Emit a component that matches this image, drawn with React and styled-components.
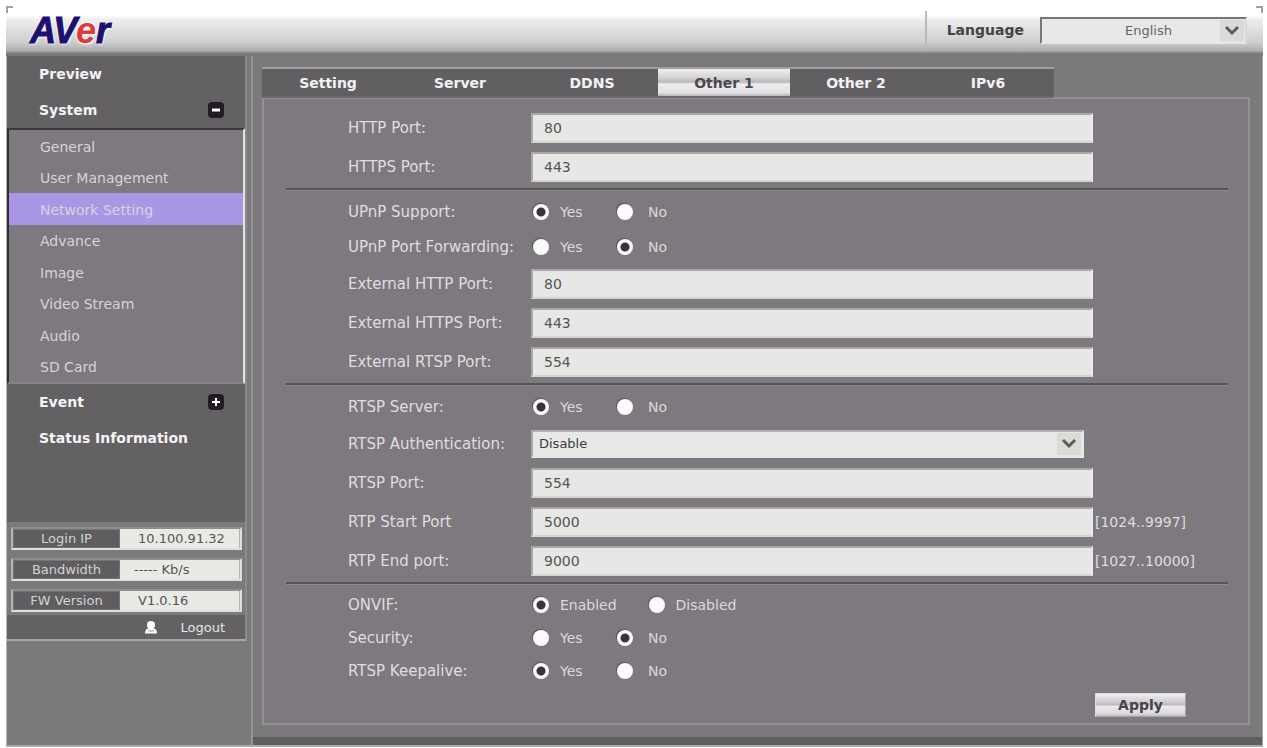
import React, { useState } from 'react'
import styled, { createGlobalStyle } from 'styled-components'

const menu = ['General', 'User Management', 'Network Setting', 'Advance', 'Image', 'Video Stream', 'Audio', 'SD Card']
const tabs = ['Setting', 'Server', 'DDNS', 'Other 1', 'Other 2', 'IPv6']

function Chevron() {
    return (
        <svg width="16" height="11" viewBox="0 0 16 11" aria-hidden="true">
            <path d="M2 2 L8 8 L14 2" fill="none" stroke="#5c5c5c" strokeWidth="3" />
        </svg>
    )
}

function TextRow({ id, label, value, hint }) {
    return (
        <Row>
            <Label htmlFor={id}>{label}</Label>
            <TextBox id={id} type="text" defaultValue={value} />
            {hint && <Hint>{hint}</Hint>}
        </Row>
    )
}

function RadioRow({ name, label, options = ['Yes', 'No'], checked, small }) {
    return (
        <Row $size={small ? 33 : 35} role="radiogroup" aria-labelledby={name}>
            <Label as="span" id={name}>{label}</Label>
            <Options>
                {options.map((option) => (
                    <Option key={option} $wide={option === 'No'}>
                        <Radio name={name} defaultChecked={option === checked} />
                        {option}
                    </Option>
                ))}
            </Options>
        </Row>
    )
}

export default function App() {
    const [tab, setTab] = useState('Other 1')

    return (
        <Page>
            <GlobalStyle />
            <Header>
                <Logo>AV<span>e</span>r</Logo>
                <Language>
                    <label htmlFor="language">Language</label>
                    <SelectWrap $top>
                        <select id="language"><option>English</option></select>
                        <Arrow><Chevron /></Arrow>
                    </SelectWrap>
                </Language>
            </Header>

            <Main>
                <Sidebar>
                    <Nav>
                        <MenuTitle href="#preview">Preview</MenuTitle>
                        <MenuTitle href="#system">
                            System
                            <Toggle viewBox="0 0 16 16">
                                <rect width="16" height="16" rx="4" fill="#201c22" />
                                <path d="M4 8 H12" stroke="#fff" strokeWidth="3" />
                            </Toggle>
                        </MenuTitle>
                        <SubMenu>
                            {menu.map((item) => (
                                <MenuItem key={item} href="#menu" $active={item === 'Network Setting'}>{item}</MenuItem>
                            ))}
                        </SubMenu>
                        <MenuTitle href="#event">
                            Event
                            <Toggle viewBox="0 0 16 16">
                                <rect width="16" height="16" rx="4" fill="#201c22" />
                                <path d="M4 8 H12 M8 4 V12" stroke="#fff" strokeWidth="2" />
                            </Toggle>
                        </MenuTitle>
                        <MenuTitle href="#status">Status Information</MenuTitle>
                    </Nav>
                    <InfoList>
                        <InfoRow><dt>Login IP</dt><dd>10.100.91.32</dd></InfoRow>
                        <InfoRow $near><dt>Bandwidth</dt><dd>----- Kb/s</dd></InfoRow>
                        <InfoRow><dt>FW Version</dt><dd>V1.0.16</dd></InfoRow>
                    </InfoList>
                    <Logout href="#logout">
                        <svg width="12" height="13" viewBox="0 0 12 13" aria-hidden="true">
                            <circle cx="6" cy="4" r="4" fill="#fff" />
                            <path d="M4 7 H8 C10.5 8 12 9 12 12.5 H0 C0 9 1.5 8 4 7 Z" fill="#fff" />
                            <path d="M3 9.5 Q6 11 9 9.5" fill="none" stroke="#9a989b" />
                        </svg>
                        Logout
                    </Logout>
                </Sidebar>

                <Content>
                    <Tabs role="tablist">
                        {tabs.map((name) => (
                            <Tab key={name} role="tab" aria-selected={name === tab} $active={name === tab} onClick={() => setTab(name)}>
                                {name}
                            </Tab>
                        ))}
                    </Tabs>
                    <Panel>
                        <Group>
                            <TextRow id="http" label="HTTP Port:" value="80" />
                            <TextRow id="https" label="HTTPS Port:" value="443" />
                        </Group>
                        <Group>
                            <RadioRow name="upnp" label="UPnP Support:" checked="Yes" />
                            <RadioRow name="forwarding" label="UPnP Port Forwarding:" checked="No" />
                            <TextRow id="ext-http" label="External HTTP Port:" value="80" />
                            <TextRow id="ext-https" label="External HTTPS Port:" value="443" />
                            <TextRow id="ext-rtsp" label="External RTSP Port:" value="554" />
                        </Group>
                        <Group>
                            <RadioRow name="rtsp-server" label="RTSP Server:" checked="Yes" />
                            <Row>
                                <Label htmlFor="rtsp-auth">RTSP Authentication:</Label>
                                <SelectWrap>
                                    <select id="rtsp-auth"><option>Disable</option></select>
                                    <Arrow><Chevron /></Arrow>
                                </SelectWrap>
                            </Row>
                            <TextRow id="rtsp-port" label="RTSP Port:" value="554" />
                            <TextRow id="rtp-start" label="RTP Start Port" value="5000" hint="[1024..9997]" />
                            <TextRow id="rtp-end" label="RTP End port:" value="9000" hint="[1027..10000]" />
                        </Group>
                        <Group>
                            <RadioRow small name="onvif" label="ONVIF:" options={['Enabled', 'Disabled']} checked="Enabled" />
                            <RadioRow small name="security" label="Security:" checked="No" />
                            <RadioRow small name="keepalive" label="RTSP Keepalive:" checked="Yes" />
                        </Group>
                        <Apply>Apply</Apply>
                    </Panel>
                </Content>
            </Main>
        </Page>
    )
}

const GlobalStyle = createGlobalStyle`
    *{
        box-sizing: border-box;
    }

    body{
        margin: 0;
        background-color: #fff;
        font-family: "DejaVu Sans", Verdana, sans-serif;
        font-size: 14px;
    }

    button, input, select{
        font-family: inherit;
    }

    a{
        text-decoration: none;
    }
`

const Page = styled.div`
    padding: 6px 4px 1px 6px;
`

const Header = styled.header`
    position: relative;
    display: flex;
    justify-content: space-between;
    height: 50px;
    background: linear-gradient(#fff 0, #fff 9px, #ededed 14px, #dedede 24px, #cfcfcf 36px, #adadad 45px, #7f7f7f 47px, #757575 50px);

    &::before, &::after{
        content: "";
        position: absolute;
        top: 0;
        width: 5px;
        height: 5px;
        border-top: 2px solid #a2a2a2;
    }

    &::before{
        left: 0;
        border-left: 2px solid #a2a2a2;
    }

    &::after{
        right: 0;
        border-right: 2px solid #a2a2a2;
    }
`

const Logo = styled.div`
    padding: 5px 0 0 24px;
    font: italic bold 36px/40px "Liberation Sans", Arial, sans-serif;
    color: #1c1070;
    -webkit-text-stroke: 1px #1c1070;
    text-shadow: 0 0 3px #fff, 0 0 3px #fff, 1px 1px 2px #fff;

    span{
        color: #e03a3f;
        -webkit-text-stroke: 0;
    }
`

const Language = styled.div`
    display: flex;
    align-items: center;
    gap: 16px;
    height: 38px;
    margin-top: 5px;
    margin-right: 16px;
    padding-left: 20px;
    border-left: 2px solid #b9b9b9;
    font-weight: bold;
    color: #454348;
`

const SelectWrap = styled.div`
    position: relative;
    width: ${(props) => (props.$top ? '207px' : 'auto')};
    margin-right: ${(props) => (props.$top ? 0 : '9px')};

    select{
        appearance: none;
        display: block;
        width: 100%;
        height: ${(props) => (props.$top ? '27px' : '28px')};
        padding: ${(props) => (props.$top ? '0 0 0 10px' : '0 28px 0 6px')};
        border: 2px solid;
        border-color: ${(props) => (props.$top ? '#77777a #d8d8d8 #e6e6e6 #77777a' : '#b0b0b0 #e8e8e8 #e8e8e8 #a9a9a9')};
        border-radius: 0;
        background-color: #e8e8e6;
        color: ${(props) => (props.$top ? '#666' : '#3c3c3c')};
        font-size: 13px;
        text-align-last: ${(props) => (props.$top ? 'center' : 'left')};
    }
`

const Arrow = styled.span`
    position: absolute;
    top: 3px;
    right: 3px;
    bottom: 3px;
    display: flex;
    align-items: center;
    justify-content: center;
    width: 24px;
    background-color: #dadad6;
    pointer-events: none;
`

const Main = styled.main`
    display: grid;
    grid-template-columns: 240px 1fr;
    gap: 4px;
    background-color: #7c797d;
    border-left: 1px solid #b5b5b5;
    border-right: 1px solid #a5a5a5;
    border-bottom: 2px solid #aaa;
`

const Sidebar = styled.aside`
    align-self: start;
    background-color: #646165;
    border-right: 2px solid #8c8a8d;
    border-bottom: 2px solid #a9a7aa;
`

const Nav = styled.nav`
    display: flex;
    flex-direction: column;
    padding-bottom: 66px;
`

const MenuTitle = styled.a`
    display: flex;
    align-items: center;
    justify-content: space-between;
    height: 36px;
    padding: 0 21px 0 32px;
    font-weight: bold;
    color: #f4f4f4;
`

const Toggle = styled.svg`
    width: 16px;
    height: 16px;
`

const SubMenu = styled.div`
    display: grid;
    grid-auto-rows: 1fr;
    min-height: 256px;
    background-color: #7d797e;
    border: 2px solid;
    border-color: #3c3a3d #e2e2e2 #858386 #2f2d30;
`

const MenuItem = styled.a`
    display: flex;
    align-items: center;
    padding-left: 31px;
    padding-top: 2px;
    background-color: ${(props) => (props.$active ? '#a997e6' : 'transparent')};
    color: #d6d4d6;
`

const InfoList = styled.dl`
    display: flex;
    flex-direction: column;
    gap: 8px;
    margin: 0;
    padding: 5px 3px 3px 4px;
    background-color: #7b7a7b;
`

const InfoRow = styled.div`
    display: grid;
    grid-template-columns: 107px 1fr;
    height: 23px;
    border: 2px solid;
    border-color: #8e8e8e #dededa #dededa #b4b4b0;
    font-size: 13px;
    line-height: 19px;

    dt{
        background-color: #5f5d60;
        border: 1px solid #757375;
        line-height: 17px;
        color: #d2d2d2;
        text-align: center;
    }

    dd{
        margin: 0;
        padding-left: ${(props) => (props.$near ? '14px' : '18px')};
        background-color: #e9eae5;
        border-right: 1px solid #b5b5b0;
        color: #555;
    }
`

const Logout = styled.a`
    display: flex;
    align-items: center;
    justify-content: flex-end;
    gap: 23px;
    height: 24px;
    padding-right: 20px;
    font-size: 13px;
    color: #e6e6e6;
`

const Content = styled.section`
    display: flex;
    flex-direction: column;
    padding: 11px 12px 12px 9px;
    border-left: 2px solid #959396;
    box-shadow: inset 0 -8px 0 #5e5e5e;
    padding-bottom: 20px;
`

const Tabs = styled.div`
    position: relative;
    display: grid;
    grid-template-columns: repeat(6, 132px);
    align-self: flex-start;
    height: 31px;
    margin-bottom: -1px;
    background-color: #625f63;
    border-top: 2px solid #a19fa1;
    border-bottom: 2px solid #6a686a;
`

const Tab = styled.button`
    border: none;
    padding: 0;
    background: ${(props) => (props.$active ? 'linear-gradient(#efedef 0, #d4d2d4 9px, #b9b7b9 13px, #eeecee 15px, #e2e0e2 24px, #b5b3b5)' : 'none')};
    color: ${(props) => (props.$active ? '#4c484e' : '#f2f2f2')};
    font-size: 14px;
    font-weight: bold;
    cursor: pointer;
`

const Panel = styled.form`
    display: flex;
    flex-direction: column;
    padding: 9px 20px 6px 22px;
    background-color: #7e797e;
    border: 2px solid #939193;
`

const Group = styled.div`
    padding-bottom: 2px;

    & + &{
        padding-top: 4px;
        border-top: 2px solid #565457;
        box-shadow: inset 0 1px 0 #8d8b8d;
    }
`

const Row = styled.div`
    display: grid;
    grid-template-columns: 183px 1fr 135px;
    align-items: center;
    min-height: ${(props) => props.$size || 39}px;
    padding-left: 62px;
`

const Label = styled.label`
    font-size: 15px;
    white-space: nowrap;
    color: #dedede;
`

const TextBox = styled.input`
    width: 100%;
    min-width: 0;
    height: 30px;
    padding: 0 11px;
    border: 2px solid;
    border-color: #a8a8a6 #eaeaea #d4d4d2 #a8a8a6;
    background-color: #e7e7e6;
    font-size: 14px;
    color: #555;
`

const Hint = styled.span`
    padding-left: 2px;
    color: #dedede;
`

const Options = styled.div`
    display: flex;
    gap: 32px;
    padding-left: 2px;
`

const Option = styled.label`
    display: flex;
    align-items: center;
    min-width: 52px;
    gap: ${(props) => (props.$wide ? '15px' : '11px')};
    color: #dadada;
`

const Radio = styled.input.attrs({ type: 'radio' })`
    appearance: none;
    width: 16px;
    height: 16px;
    margin: 0;
    border-radius: 50%;
    background-color: #fbfbfb;
    box-shadow: -1px -1px 1px #5a585a;

    &:checked{
        background-image: radial-gradient(circle, #38343a 0, #38343a 4px, transparent 5px);
    }
`

const Apply = styled.button.attrs({ type: 'button' })`
    align-self: flex-end;
    width: 91px;
    height: 24px;
    margin-top: 4px;
    margin-right: 42px;
    padding: 0;
    border: 1px solid;
    border-color: #dcdcdc #a5a3a5 #a5a3a5 #dcdcdc;
    background: linear-gradient(#f0eef0 0, #cfcdcf 8px, #b9b7b9 11px, #eceaec 12px, #dddbdd 19px, #c2c0c2);
    font-size: 14px;
    font-weight: bold;
    color: #48444a;
`
